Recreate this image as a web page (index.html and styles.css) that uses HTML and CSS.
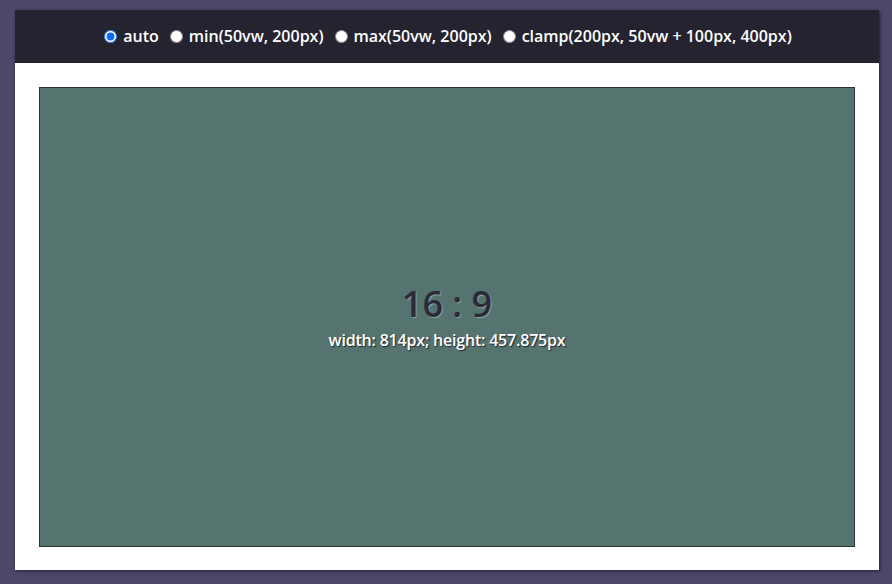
FILE: index.html
```html
<!DOCTYPE html>
<html lang="en">
<head>
<meta charset="utf-8">
<title>aspect-ratio</title>
<link rel="stylesheet" href="styles.css">
</head>
<body>
<main class="panel">
  <header class="controls">
    <label class="opt"><input type="radio" name="w" checked> auto</label>
    <label class="opt"><input type="radio" name="w"> min(50vw, 200px)</label>
    <label class="opt"><input type="radio" name="w"> max(50vw, 200px)</label>
    <label class="opt"><input type="radio" name="w"> clamp(200px, 50vw + 100px, 400px)</label>
  </header>
  <section class="stage">
    <div class="box">
      <div class="ratio">16 : 9</div>
      <div class="dims">width: 814px; height: 457.875px</div>
    </div>
  </section>
</main>
</body>
</html>
```
FILE: styles.css
```css
html, body {
  margin: 0;
  padding: 0;
}
body {
  background: #4b4868;
  font-family: "Open Sans", "Noto Sans", sans-serif;
  padding: 10px 13px 14px 15px;
  box-sizing: border-box;
  height: 584px;
  overflow: hidden;
}
.panel {
  background: #ffffff;
  width: 864px;
  height: 560px;
  box-shadow: 1px 1px 3px rgba(20, 20, 30, 0.8);
  display: flex;
  flex-direction: column;
}
.controls {
  background: #24232f;
  height: 53px;
  flex: none;
  display: flex;
  align-items: center;
  justify-content: center;
  gap: 11px;
  color: #ffffff;
  font-size: 16px;
  font-weight: 600;
  border-bottom: 1px dashed #1b1a24;
  box-sizing: border-box;
  padding-left: 2px;
}
.opt {
  display: flex;
  align-items: center;
  gap: 6px;
  white-space: nowrap;
}
.opt input {
  margin: 0;
  width: 13px;
  height: 13px;
  accent-color: #0b6cf0;
}
.stage {
  flex: 1;
  padding: 24px;
}
.box {
  height: 459.875px;
  box-sizing: border-box;
  background: #55736f;
  border: 1px solid #2b3332;
  display: flex;
  flex-direction: column;
  align-items: center;
  justify-content: center;
}
.ratio {
  font-size: 36px;
  font-weight: 600;
  color: #2a2a38;
  line-height: 44px;
  margin-bottom: 3px;
  text-shadow: 1px 1px 1px rgba(255, 255, 255, 0.35);
}
.dims {
  font-size: 16px;
  font-weight: 600;
  color: #ffffff;
  line-height: 22px;
  letter-spacing: -0.2px;
  text-shadow: 1px 1px 1px rgba(20, 20, 30, 0.8);
}
```
